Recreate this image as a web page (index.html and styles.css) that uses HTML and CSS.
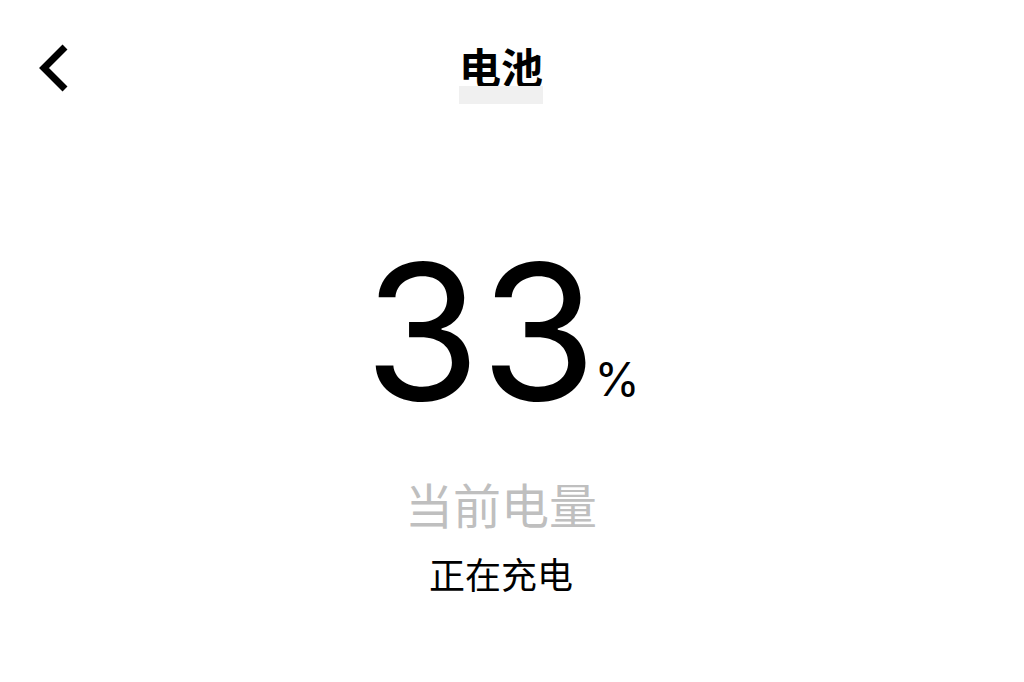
FILE: index.html
```html
<!DOCTYPE html>
<html lang="zh">
<head>
<meta charset="utf-8">
<link rel="stylesheet" href="styles.css">
</head>
<body>
<div class="page">
  <header class="topbar">
    <div class="back">
      <svg width="34" height="50" viewBox="0 0 34 50"><path d="M29 4 L8 25 L29 46" fill="none" stroke="#000" stroke-width="7" stroke-linecap="butt" stroke-linejoin="miter"/></svg>
    </div>
    <div class="title-wrap">
      <h1 class="title">电池</h1>
      <div class="title-shade"></div>
    </div>
  </header>
  <main class="content">
    <div class="level"><span class="num">33</span><span class="pct">%</span></div>
    <div class="label">当前电量</div>
    <div class="status">正在充电</div>
  </main>
</div>
</body>
</html>
```
FILE: styles.css
```css
html, body { margin: 0; padding: 0; background: #fff; }
body { font-family: Inter, "Noto Sans CJK SC", sans-serif; color: #000; }
.page { width: 1024px; height: 682px; position: relative; overflow: hidden; padding-right: 22px; box-sizing: border-box; }
.topbar { height: 110px; display: flex; justify-content: center; }
.back { position: absolute; left: 36px; top: 43px; }
.back svg { display: block; }
.title-wrap { display: flex; flex-direction: column; align-items: center; padding-top: 44px; }
.title { margin: 0; font-size: 42px; line-height: 44px; font-weight: 700; font-family: "Noto Sans CJK SC", sans-serif; }
.title-shade { width: 84px; height: 18px; background: #f0f0f0; margin-top: -2px; }
.content { display: flex; flex-direction: column; align-items: center; }
.level { margin-top: 122px; height: 200px; line-height: 200px; white-space: nowrap; padding-left: 2px; }
.num { font-size: 188px; font-weight: 400; }
.pct { font-size: 46px; margin-left: -2px; vertical-align: 4px; line-height: 46px; }
.label { font-family: "Noto Sans CJK SC", sans-serif; font-size: 48px; line-height: 60px; color: #bfbfbf; margin-top: 41px; }
.status { font-family: "Noto Sans CJK SC", sans-serif; font-size: 36px; line-height: 50px; color: #000; margin-top: 15px; }
```
